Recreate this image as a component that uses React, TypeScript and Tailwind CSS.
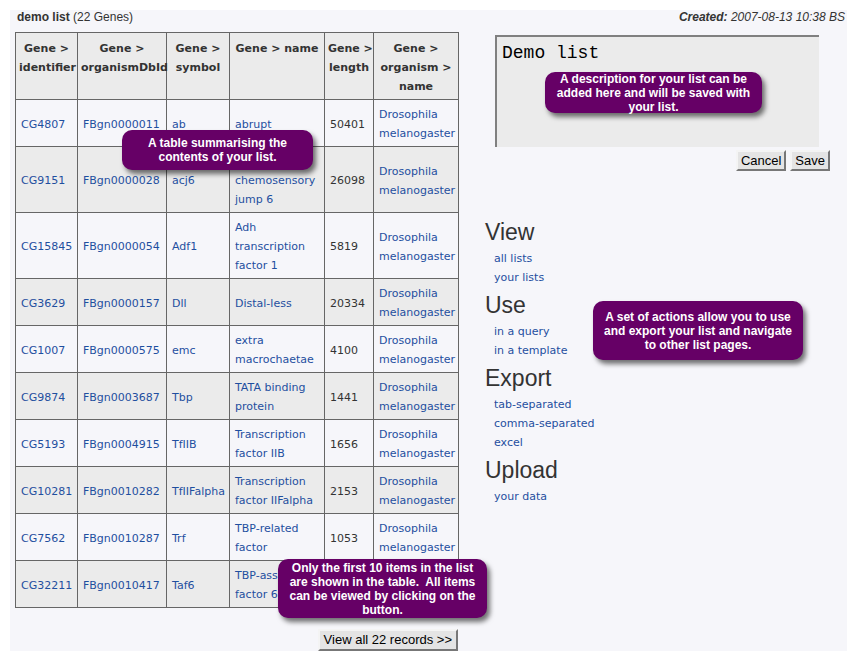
const genes = [
  ["CG4807", "FBgn0000011", "ab", "abrupt", "50401"],
  ["CG9151", "FBgn0000028", "acj6", "abnormal chemosensory jump 6", "26098"],
  ["CG15845", "FBgn0000054", "Adf1", "Adh transcription factor 1", "5819"],
  ["CG3629", "FBgn0000157", "Dll", "Distal-less", "20334"],
  ["CG1007", "FBgn0000575", "emc", "extra macrochaetae", "4100"],
  ["CG9874", "FBgn0003687", "Tbp", "TATA binding protein", "1441"],
  ["CG5193", "FBgn0004915", "TfIIB", "Transcription factor IIB", "1656"],
  ["CG10281", "FBgn0010282", "TfIIFalpha", "Transcription factor IIFalpha", "2153"],
  ["CG7562", "FBgn0010287", "Trf", "TBP-related factor", "1053"],
  ["CG32211", "FBgn0010417", "Taf6", "TBP-associated factor 6", "2146"],
];

const headers = [
  ["Gene >", "identifier"],
  ["Gene >", "organismDbId"],
  ["Gene >", "symbol"],
  ["Gene > name"],
  ["Gene >", "length"],
  ["Gene >", "organism >", "name"],
];

const colWidths = ["w-[62px]", "w-[89px]", "w-[63px]", "w-[95px]", "w-[49px]", "w-[85px]"];

const actions = [
  { title: "View", links: ["all lists", "your lists"] },
  { title: "Use", links: ["in a query", "in a template"] },
  { title: "Export", links: ["tab-separated", "comma-separated", "excel"] },
  { title: "Upload", links: ["your data"] },
];

const Bubble = ({ className, lines }: { className: string; lines: string[] }) => (
  <div
    className={`absolute flex flex-col items-center justify-center rounded-[10px] bg-[#660066] text-center font-['Liberation_Sans',Arial,sans-serif] text-[12px] font-bold leading-[14px] text-white shadow-[3px_4px_5px_rgba(0,0,0,0.55)] ${className}`}
  >
    {lines.map((l, i) => (
      <span key={i} className="whitespace-pre">
        {l}
      </span>
    ))}
  </div>
);

const btn =
  "border-2 border-b-[#777] border-l-[#f4f4f4] border-r-[#777] border-t-[#f4f4f4] bg-[#e4e4e4] font-['Liberation_Sans',Arial,sans-serif] text-[13px] leading-[16px] text-black";

export default function App() {
  return (
    <div className="relative min-h-screen bg-white px-[10px] pt-[10px] text-[#333]">
      <div className="h-[641px] bg-[#f6f6fa]">
        {/* title row */}
        <div className="flex justify-between pl-[7px] pr-[2px] font-['Liberation_Sans',Arial,sans-serif] text-[12px] leading-[14px]">
          <div>
            <span className="font-bold">demo list</span> (22 Genes)
          </div>
          <div className="italic">
            <span className="font-bold">Created:</span> 2007-08-13 10:38 BS
          </div>
        </div>

        <div className="mt-[8px] flex pl-[5px]">
          {/* table column */}
          <div className="flex w-[443px] flex-col">
            <table className="w-[443px] table-fixed border-collapse font-['DejaVu_Sans',sans-serif] text-[11px] leading-[19px]">
              <colgroup>
                {colWidths.map((w, i) => (
                  <col key={i} className={w} />
                ))}
              </colgroup>
              <thead>
                <tr className="bg-[#ebebeb]">
                  {headers.map((h, i) => (
                    <th
                      key={i}
                      className="h-[66px] border border-[#666] px-[3px] pb-[3px] pt-[6px] text-center align-top font-bold text-[#333]"
                    >
                      {h.map((l, j) => (
                        <div key={j} className="whitespace-nowrap">
                          {l}
                        </div>
                      ))}
                    </th>
                  ))}
                </tr>
              </thead>
              <tbody>
                {genes.map((g, i) => (
                  <tr key={g[0]} className={i % 2 === 1 ? "bg-[#ebebeb]" : ""}>
                    {g.map((c, j) => (
                      <td
                        key={j}
                        className={`border border-[#666] px-[5px] pb-[3px] pt-[5px] align-middle ${
                          j === 4 ? "text-[#333]" : "text-[#1f4f9f]"
                        }`}
                      >
                        {c}
                      </td>
                    ))}
                    <td className="border border-[#666] px-[5px] pb-[3px] pt-[5px] align-middle text-[#1f4f9f]">
                      Drosophila melanogaster
                    </td>
                  </tr>
                ))}
              </tbody>
            </table>
            <div className="mt-[21px] flex justify-end">
              <button className={`h-[22px] px-[4px] ${btn}`}>View all 22 records &gt;&gt;</button>
            </div>
          </div>

          {/* right column */}
          <div className="ml-[27px] w-[345px]">
            <div className="ml-[10px] mt-[3px] h-[112px] w-[324px] border-l-2 border-t-2 border-[#808080] bg-[#ebebeb] px-[5px] pt-[4px] font-['Liberation_Mono',monospace] text-[18px] leading-[24px] text-black">
              Demo list
            </div>
            <div className="mt-[3px] flex justify-end gap-[4px]">
              <button className={`h-[21px] px-[3px] ${btn}`}>Cancel</button>
              <button className={`h-[21px] px-[3px] ${btn}`}>Save</button>
            </div>

            <div className="mt-[47px]">
              {actions.map((a) => (
                <div key={a.title} className="mb-[4px]">
                  <h2 className="font-['Liberation_Sans',Arial,sans-serif] text-[23px] leading-[28px] text-[#333]">
                    {a.title}
                  </h2>
                  <ul className="mt-[3px] pl-[9px] font-['DejaVu_Sans',sans-serif] text-[11px] leading-[19px] text-[#1f4f9f]">
                    {a.links.map((l) => (
                      <li key={l}>{l}</li>
                    ))}
                  </ul>
                </div>
              ))}
            </div>
          </div>
        </div>
      </div>

      <Bubble
        className="left-[122px] top-[130px] h-[40px] w-[191px]"
        lines={["A table summarising the", "contents of your list."]}
      />
      <Bubble
        className="left-[545px] top-[72px] h-[41px] w-[217px]"
        lines={["A description for your list can be", "added here and will be saved with", "your list."]}
      />
      <Bubble
        className="left-[593px] top-[301px] h-[59px] w-[210px]"
        lines={["A set of actions allow you to use", "and export your list and navigate", "to other list pages."]}
      />
      <Bubble
        className="left-[278px] top-[559px] h-[59px] w-[209px]"
        lines={[
          "Only the first 10 items in the list",
          "are shown in the table.  All items",
          "can be viewed by clicking on the",
          "button.",
        ]}
      />
    </div>
  );
}
